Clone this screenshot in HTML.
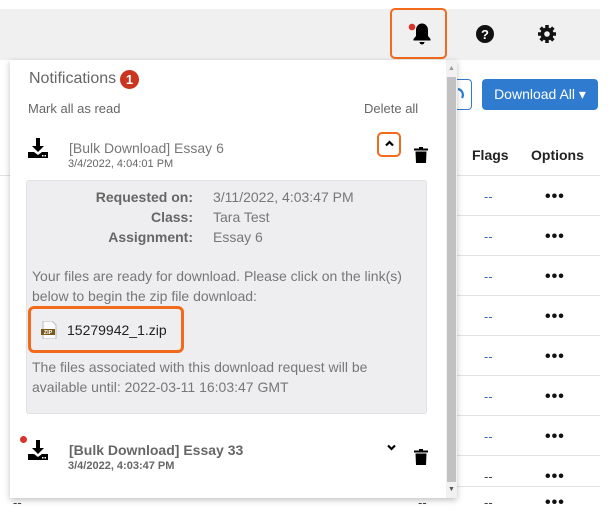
<!DOCTYPE html>
<html><head><style>
*{box-sizing:border-box;margin:0;padding:0}
body{width:613px;height:509px;background:#fff;position:relative;overflow:hidden;font-family:"Liberation Sans",sans-serif;color:#555}
.abs{position:absolute}
.topbar{left:0;top:9px;width:600px;height:51px;background:#f0f0f1}
.row{left:440px;width:160px;height:1px;background:#e2e2e2}
.dash{color:#3a6fb5;font-size:13px}
.dots{font-size:16px;color:#111;letter-spacing:1px;font-weight:bold}
.panel{left:10px;top:60px;width:447px;height:438px;background:#fff;box-shadow:0 2px 6px rgba(0,0,0,.25)}
.orange{border:2.5px solid #f26b1d;border-radius:5px}
</style></head><body>
<div class="abs topbar"></div>
<div class="abs orange" style="left:390px;top:8px;width:57px;height:51px"></div>
<svg class="abs" style="left:406px;top:21px" width="28" height="26" viewBox="0 0 28 26"><circle cx="6" cy="6" r="3.3" fill="#d9342b"/><path d="M16 2.5c-3.5 0-6 3-6 6.5v6L7.5 18v1.5h17V18L22 15V9c0-3.5-2.5-6.5-6-6.5z" fill="#000"/><path d="M13.5 21a2.5 2.5 0 0 0 5 0z" fill="#000"/></svg>
<svg class="abs" style="left:475px;top:24px" width="20" height="20" viewBox="0 0 20 20"><circle cx="10" cy="10" r="9" fill="#111"/><text x="10" y="15" text-anchor="middle" font-family="Liberation Sans" font-weight="bold" font-size="13" fill="#fff">?</text></svg>
<svg class="abs" style="left:537px;top:24px" width="20" height="20" viewBox="0 0 20 20"><g fill="#111"><circle cx="10" cy="10" r="6.5"/><g stroke="#111" stroke-width="3.5"><line x1="10" y1="1" x2="10" y2="19"/><line x1="1" y1="10" x2="19" y2="10"/><line x1="3.6" y1="3.6" x2="16.4" y2="16.4"/><line x1="16.4" y1="3.6" x2="3.6" y2="16.4"/></g></g><circle cx="10" cy="10" r="2.8" fill="#f0f0f1"/></svg>

<div class="abs" style="left:455px;top:79px;width:17px;height:31px;border:1px solid #2f7bd0;border-left:none;border-radius:0 4px 4px 0"></div>
<svg class="abs" style="left:457px;top:85px" width="10" height="18" viewBox="0 0 10 18"><path d="M1 4a6 6 0 0 1 4 9" stroke="#2f7bd0" stroke-width="2.2" fill="none"/></svg>
<div class="abs" style="left:482px;top:79px;width:116px;height:31px;background:#2f7bd0;border-radius:4px;color:#fff;font-size:14px;line-height:31px;text-align:center">Download All ▾</div>
<div class="abs" style="left:472px;top:147px;font-size:14px;font-weight:bold;color:#222">Flags</div>
<div class="abs" style="left:531px;top:147px;font-size:14px;font-weight:bold;color:#222">Options</div>
<div class="abs row" style="top:175px"></div><div class="abs row" style="top:215px"></div><div class="abs row" style="top:255px"></div><div class="abs row" style="top:295px"></div><div class="abs row" style="top:335px"></div><div class="abs row" style="top:375px"></div><div class="abs row" style="top:415px"></div><div class="abs row" style="top:455px"></div><div class="abs row" style="top:486px"></div>
<div class="abs" style="left:0;top:175px;width:10px;height:1px;background:#e2e2e2"></div>
<div class="abs dash" style="left:484px;top:189px">--</div><div class="abs dots" style="left:545px;top:188px">•••</div>
<div class="abs dash" style="left:484px;top:229px">--</div><div class="abs dots" style="left:545px;top:228px">•••</div>
<div class="abs dash" style="left:484px;top:269px">--</div><div class="abs dots" style="left:545px;top:268px">•••</div>
<div class="abs dash" style="left:484px;top:309px">--</div><div class="abs dots" style="left:545px;top:308px">•••</div>
<div class="abs dash" style="left:484px;top:349px">--</div><div class="abs dots" style="left:545px;top:348px">•••</div>
<div class="abs dash" style="left:484px;top:389px">--</div><div class="abs dots" style="left:545px;top:388px">•••</div>
<div class="abs dash" style="left:484px;top:429px">--</div><div class="abs dots" style="left:545px;top:428px">•••</div>
<div class="abs dash" style="left:484px;top:469px;color:#444">--</div><div class="abs dots" style="left:545px;top:468px">•••</div>
<div class="abs dash" style="left:484px;top:495px;color:#444">--</div><div class="abs dots" style="left:545px;top:494px">•••</div>
<div class="abs" style="left:13px;top:495px;font-size:13px;color:#444">--</div>
<div class="abs" style="left:418px;top:495px;font-size:13px;color:#444">--</div>

<div class="abs panel">
 <div class="abs" style="left:436px;top:0;width:11px;height:438px;background:#f1f1f1"></div>
 <div class="abs" style="left:437px;top:17px;width:9px;height:405px;background:#c1c1c1"></div>
 <div class="abs" style="left:438px;top:5px;font-size:7px;color:#999">▲</div>
 <div class="abs" style="left:438px;top:426px;font-size:7px;color:#555">▼</div>
 <div class="abs" style="left:19px;top:10px;font-size:16px;color:#666">Notifications</div>
 <div class="abs" style="left:110px;top:10px;width:19px;height:19px;border-radius:50%;background:#c9351f;color:#fff;font-size:13px;font-weight:bold;text-align:center;line-height:19px">1</div>
 <div class="abs" style="left:18px;top:41px;font-size:13px;color:#666">Mark all as read</div>
 <div class="abs" style="left:354px;top:41px;font-size:13px;color:#666">Delete all</div>
 <svg class="abs" style="left:18px;top:78px" width="20" height="20" viewBox="0 0 20 20"><path d="M8 0h4v8h4l-6 6-6-6h4z" fill="#000"/><path d="M0 14h6l4 3 4-3h6v6H0z" fill="#000"/><rect x="14" y="17" width="1.5" height="1.5" fill="#fff"/><rect x="16.5" y="17" width="1.5" height="1.5" fill="#fff"/></svg>
 <div class="abs" style="left:59px;top:80px;font-size:14px;color:#777">[Bulk Download] Essay 6</div>
 <div class="abs" style="left:58px;top:98px;font-size:11px;color:#666">3/4/2022, 4:04:01 PM</div>
 <div class="abs orange" style="left:367px;top:72px;width:24px;height:25px;border-width:2.5px"></div>
 <svg class="abs" style="left:375px;top:80px" width="9" height="7" viewBox="0 0 9 7"><path d="M1 5.5L4.5 2 8 5.5" stroke="#000" stroke-width="2.2" fill="none"/></svg>
 <svg class="abs" style="left:404px;top:87px" width="14" height="16" viewBox="0 0 14 16"><rect x="0" y="1.5" width="14" height="2" fill="#000"/><rect x="5" y="0" width="4" height="2" fill="#000"/><path d="M1.5 4.5h11L12 16H2z" fill="#000"/></svg>
 <div class="abs" style="left:16px;top:120px;width:401px;height:234px;background:#eeeef0;border:1px solid #e2e2e4;border-radius:3px"></div>
 <div class="abs" style="left:84px;top:127px;font-size:14px;font-weight:bold;color:#666;text-align:right;width:99px;line-height:20px">Requested on:<br>Class:<br>Assignment:</div>
 <div class="abs" style="left:203px;top:127px;font-size:14px;color:#777;line-height:20px">3/11/2022, 4:03:47 PM<br>Tara Test<br>Essay 6</div>
 <div class="abs" style="left:22px;top:206px;font-size:14px;color:#777;line-height:20px">Your files are ready for download. Please click on the link(s)<br>below to begin the zip file download:</div>
 <div class="abs orange" style="left:18px;top:246px;width:156px;height:47px;border-width:3px;border-radius:6px"></div>
 <svg class="abs" style="left:31px;top:261px" width="16" height="18" viewBox="0 0 16 18"><path d="M2 0h9l4 4v14H2z" fill="#fafafa" stroke="#bbb"/><rect x="0" y="8" width="14" height="6" fill="#7a5a1a"/><text x="7" y="13" text-anchor="middle" font-size="5.5" fill="#fff" font-family="Liberation Sans" font-weight="bold">ZIP</text></svg>
 <div class="abs" style="left:57px;top:262px;font-size:14px;color:#222">15279942_1.zip</div>
 <div class="abs" style="left:22px;top:297px;font-size:14px;color:#777;line-height:20px">The files associated with this download request will be<br>available until: 2022-03-11 16:03:47 GMT</div>
 <div class="abs" style="left:10px;top:376px;width:7px;height:7px;border-radius:50%;background:#d9342b"></div>
 <svg class="abs" style="left:18px;top:380px" width="20" height="20" viewBox="0 0 20 20"><path d="M8 0h4v8h4l-6 6-6-6h4z" fill="#000"/><path d="M0 14h6l4 3 4-3h6v6H0z" fill="#000"/><rect x="14" y="17" width="1.5" height="1.5" fill="#fff"/><rect x="16.5" y="17" width="1.5" height="1.5" fill="#fff"/></svg>
 <div class="abs" style="left:59px;top:382px;font-size:14px;font-weight:bold;color:#666">[Bulk Download] Essay 33</div>
 <div class="abs" style="left:58px;top:400px;font-size:11px;font-weight:bold;color:#666">3/4/2022, 4:03:47 PM</div>
 <svg class="abs" style="left:377px;top:384px" width="9" height="7" viewBox="0 0 9 7"><path d="M1 1.5L4.5 5 8 1.5" stroke="#000" stroke-width="2.2" fill="none"/></svg>
 <svg class="abs" style="left:404px;top:389px" width="14" height="16" viewBox="0 0 14 16"><rect x="0" y="1.5" width="14" height="2" fill="#000"/><rect x="5" y="0" width="4" height="2" fill="#000"/><path d="M1.5 4.5h11L12 16H2z" fill="#000"/></svg>
</div>
</body></html>
